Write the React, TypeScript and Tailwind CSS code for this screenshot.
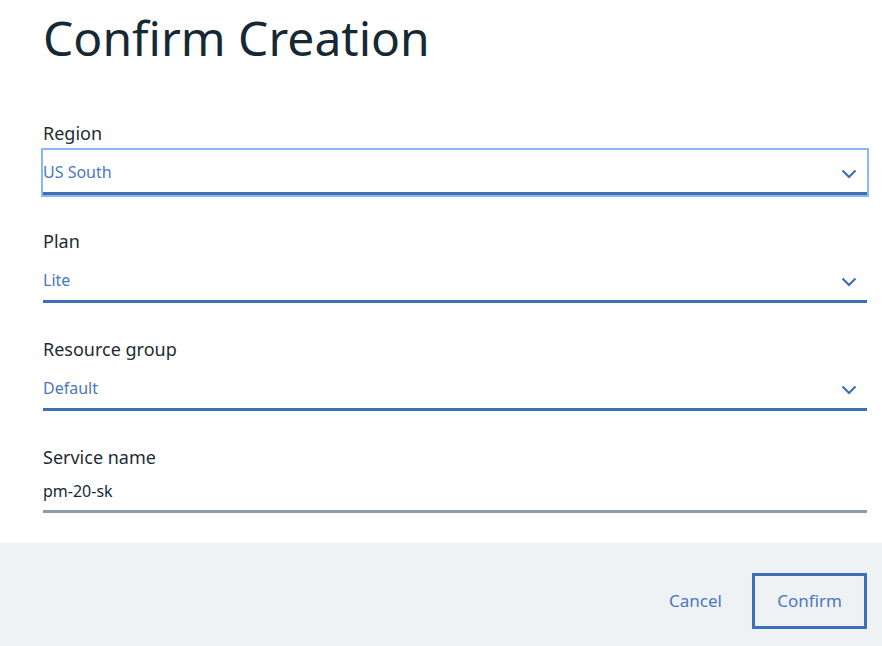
import React from "react";

const fields = [
  { label: "Region", value: "US South", select: true, focused: true },
  { label: "Plan", value: "Lite", select: true, focused: false },
  { label: "Resource group", value: "Default", select: true, focused: false },
];

function Chevron() {
  return (
    <svg width="16" height="10" viewBox="0 0 16 10" fill="none">
      <path d="M1.5 1.5 L8 8 L14.5 1.5" stroke="#3d70b2" strokeWidth="2.2" />
    </svg>
  );
}

export default function App() {
  return (
    <div
      className="w-[882px] h-[646px] bg-white flex flex-col overflow-hidden"
      style={{ fontFamily: '"Noto Sans", "Open Sans", sans-serif' }}
    >
      <div className="pl-[43px] pr-[15px] pt-[6px] flex flex-col">
        <h1 className="text-[48px] leading-[64px] text-[#152935] font-normal">
          Confirm Creation
        </h1>

        <div className="mt-[52px] flex flex-col gap-[35px]">
          {fields.map((f) => (
            <div key={f.label} className="flex flex-col">
              <label className="text-[18px] leading-[22px] text-[#1f2b33]">
                {f.label}
              </label>
              <div
                className={
                  "mt-[6px] h-[45px] flex items-center justify-between border-b-[3px] border-[#3d70b2] pr-[10px] " +
                  (f.focused ? "ring-2 ring-[#8ab8f5]" : "")
                }
              >
                <span className="mt-[1px] text-[16px] text-[#4a78c0]">{f.value}</span>
                <span className="mt-[6px]">
                  <Chevron />
                </span>
              </div>
            </div>
          ))}

          <div className="flex flex-col">
            <label className="text-[18px] leading-[22px] text-[#1f2b33]">
              Service name
            </label>
            <div className="mt-[4px] h-[41px] flex items-center border-b-[3px] border-[#8c9ba5]">
              <span className="text-[16px] text-[#152935]">pm-20-sk</span>
            </div>
          </div>
        </div>
      </div>

      <div className="mt-[30px] flex-1 bg-[#eff2f5] flex justify-end items-start pr-[15px] pt-[30px]">
        <button className="h-[56px] px-[26px] text-[17px] text-[#4a78c0] mr-[4px]">
          Cancel
        </button>
        <button className="w-[115px] h-[56px] border-[3px] border-[#3d70b2] text-[17px] text-[#4a78c0]">
          Confirm
        </button>
      </div>
    </div>
  );
}
